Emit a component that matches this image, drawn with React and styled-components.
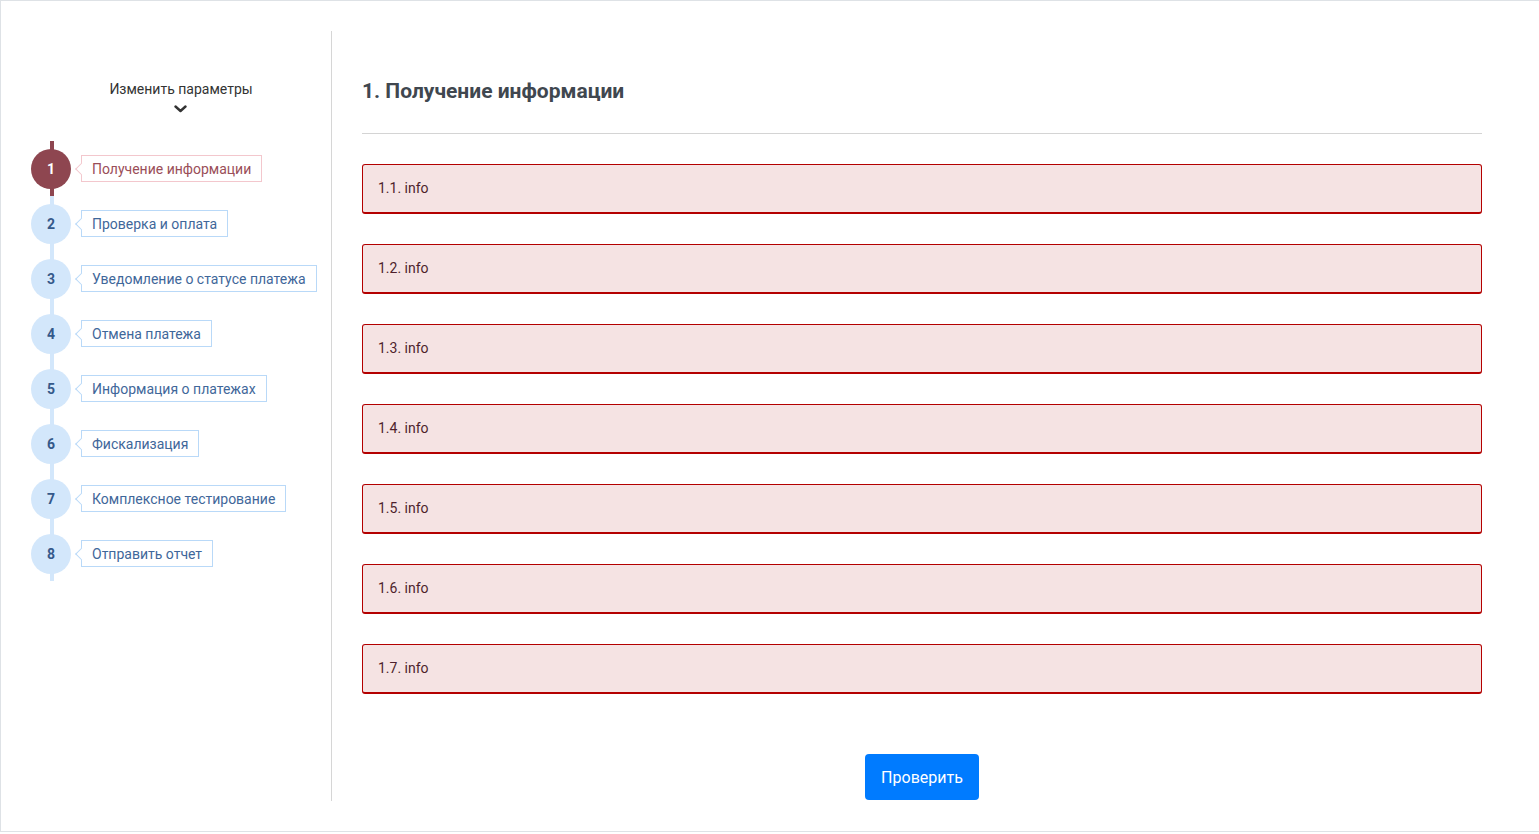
import React from "react";
import styled, { createGlobalStyle } from "styled-components";

const Global = createGlobalStyle`
  html, body { margin: 0; padding: 0; background: #fff; }
  body { font-family: Roboto, "Liberation Sans", sans-serif; }
  * { box-sizing: border-box; }
`;

const Card = styled.div`
  width: calc(100% + 1px);
  height: 832px;
  border: 1px solid #dee2e6;
  border-right: none;
  background: #fff;
  padding: 30px 0;
  display: flex;
  box-shadow: 0 1px 2px rgba(0,0,0,0.06);
`;

const Sidebar = styled.aside`
  width: 331px;
  flex: none;
  border-right: 1px solid #d6d6d6;
  display: flex;
  flex-direction: column;
  padding-left: 30px;
`;

const ParamsToggle = styled.button`
  margin: 50px auto 0;
  background: none;
  border: none;
  padding: 0;
  display: flex;
  flex-direction: column;
  align-items: center;
  font-family: inherit;
  font-size: 14px;
  line-height: 16px;
  color: #333;
  cursor: pointer;
  svg { margin-top: 8px; }
`;

const StepList = styled.ol`
  list-style: none;
  margin: 28px 0 0 0;
  padding: 0;
`;

const Step = styled.li`
  position: relative;
  height: 55px;
  display: flex;
  align-items: center;
  &::before {
    content: "";
    position: absolute;
    left: 19px;
    top: 0;
    bottom: 0;
    width: 4px;
    background: ${p => (p.$active ? "#8e4650" : "#d3e7fb")};
  }
`;

const Circle = styled.span`
  position: relative;
  z-index: 1;
  width: 40px;
  height: 40px;
  border-radius: 50%;
  flex: none;
  display: flex;
  align-items: center;
  justify-content: center;
  font-weight: 700;
  font-size: 14px;
  background: ${p => (p.$active ? "#8e4650" : "#d3e7fb")};
  color: ${p => (p.$active ? "#fff" : "#35598a")};
`;

const Label = styled.span`
  position: relative;
  margin-left: 10px;
  height: 27px;
  padding: 0 10px;
  display: flex;
  align-items: center;
  font-size: 14px;
  white-space: nowrap;
  background: #fff;
  border: 1px solid ${p => (p.$active ? "#f3c7cd" : "#b9d9f8")};
  color: ${p => (p.$active ? "#9a4e58" : "#3f679a")};
  &::before {
    content: "";
    position: absolute;
    left: -5px;
    top: 50%;
    width: 8px;
    height: 8px;
    background: #fff;
    border-left: 1px solid ${p => (p.$active ? "#f3c7cd" : "#b9d9f8")};
    border-bottom: 1px solid ${p => (p.$active ? "#f3c7cd" : "#b9d9f8")};
    transform: translateY(-50%) rotate(45deg);
  }
`;

const Main = styled.main`
  flex: 1;
  padding: 0 58px 0 30px;
  display: flex;
  flex-direction: column;
`;

const Title = styled.h2`
  margin: 48px 0 0;
  font-size: 21px;
  line-height: 24px;
  font-weight: 700;
  color: #40474f;
`;

const Rule = styled.hr`
  margin: 30px 0 0;
  border: none;
  border-top: 1px solid #d4d4d4;
  height: 0;
`;

const Alerts = styled.div`
  margin-top: 30px;
  display: flex;
  flex-direction: column;
  gap: 30px;
`;

const Alert = styled.div`
  height: 50px;
  display: flex;
  align-items: center;
  padding: 0 15px 1px;
  background: #f5e3e3;
  border: 1px solid #b40000;
  border-bottom-width: 2px;
  border-radius: 3px;
  font-size: 14px;
  color: #4e1f2c;
`;

const ButtonRow = styled.div`
  margin-top: 60px;
  display: flex;
  justify-content: center;
`;

const CheckButton = styled.button`
  height: 46px;
  padding: 0 16px;
  border: none;
  border-radius: 4px;
  background: #007bff;
  color: #fff;
  font-family: inherit;
  font-size: 16px;
  cursor: pointer;
`;

const steps = [
  "Получение информации",
  "Проверка и оплата",
  "Уведомление о статусе платежа",
  "Отмена платежа",
  "Информация о платежах",
  "Фискализация",
  "Комплексное тестирование",
  "Отправить отчет",
];

export default function App() {
  return (
    <>
      <Global />
      <Card>
        <Sidebar>
          <ParamsToggle>
            Изменить параметры
            <svg width="13" height="8" viewBox="0 0 13 8">
              <path d="M1.5 1.5 L6.5 6 L11.5 1.5" fill="none" stroke="#333" strokeWidth="2.4" strokeLinecap="round" strokeLinejoin="round" />
            </svg>
          </ParamsToggle>
          <StepList>
            {steps.map((s, i) => (
              <Step key={s} $active={i === 0}>
                <Circle $active={i === 0}>{i + 1}</Circle>
                <Label $active={i === 0}>{s}</Label>
              </Step>
            ))}
          </StepList>
        </Sidebar>
        <Main>
          <Title>1. Получение информации</Title>
          <Rule />
          <Alerts>
            {[1, 2, 3, 4, 5, 6, 7].map(n => (
              <Alert key={n}>1.{n}. info</Alert>
            ))}
          </Alerts>
          <ButtonRow>
            <CheckButton>Проверить</CheckButton>
          </ButtonRow>
        </Main>
      </Card>
    </>
  );
}
